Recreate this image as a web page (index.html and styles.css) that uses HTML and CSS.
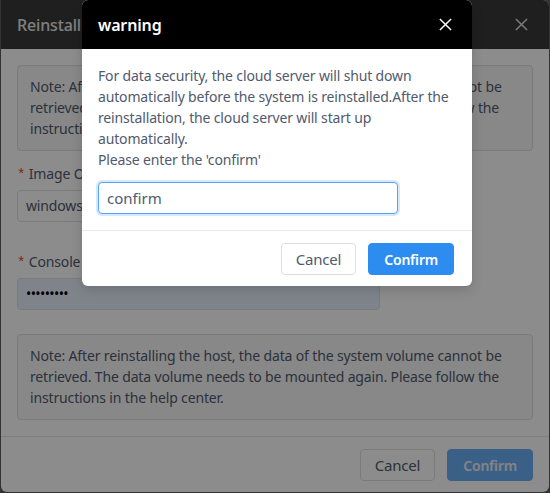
FILE: index.html
```html
<!DOCTYPE html>
<html lang="en">
<head>
    <meta charset="UTF-8">
    <meta name="viewport" content="width=device-width, initial-scale=1.0">
    <title>Reinstall</title>
    <link rel="stylesheet" href="styles.css">
</head>
<body>

    <div class="modal">
        <div class="modal-header">
            <span class="modal-title">Reinstall system</span>
            <svg class="modal-close" width="14" height="14" viewBox="0 0 14 14"><path d="M1 1L13 13M13 1L1 13" stroke="currentColor" stroke-width="1.6" fill="none"/></svg>
        </div>
        <div class="modal-body">
            <div class="note">Note: After reinstalling the host, the data of the system volume cannot be retrieved. The data volume needs to be mounted again. Please follow the instructions in the help center.</div>

            <div class="form-item form-item-first">
                <label class="form-label"><span class="req">*</span> Image OS</label>
                <div class="select">windows server 2019</div>
            </div>

            <div class="form-item">
                <label class="form-label"><span class="req">*</span> Console password</label>
                <div class="input password">&#8226;&#8226;&#8226;&#8226;&#8226;&#8226;&#8226;&#8226;&#8226;</div>
            </div>

            <div class="note">Note: After reinstalling the host, the data of the system volume cannot be retrieved. The data volume needs to be mounted again. Please follow the instructions in the help center.</div>
        </div>
        <div class="modal-footer">
            <button class="btn">Cancel</button>
            <button class="btn btn-primary btn-loading">Confirm</button>
        </div>
    </div>

    <div class="mask"></div>

    <div class="modal warning">
        <div class="modal-header">
            <span class="modal-title">warning</span>
            <svg class="modal-close" width="14" height="14" viewBox="0 0 14 14"><path d="M1 1L13 13M13 1L1 13" stroke="currentColor" stroke-width="1.6" fill="none"/></svg>
        </div>
        <div class="modal-body">
            <p class="warning-text">For data security, the cloud server will shut down automatically before the system is reinstalled.After the reinstallation, the cloud server will start up automatically.<br>Please enter the 'confirm'</p>
            <input class="input confirm-input" type="text" value="confirm">
        </div>
        <div class="modal-footer">
            <button class="btn">Cancel</button>
            <button class="btn btn-primary">Confirm</button>
        </div>
    </div>

</body>
</html>
```

FILE: styles.css
```css
body {
    margin: 0;
    height: 493px;
    overflow: hidden;
    background: #5e5e5e;
    font-family: "Noto Sans", sans-serif;
    font-size: 14px;
    letter-spacing: -0.15px;
    color: #515a6e;
    position: relative;
}

.modal {
    margin-left: 1px;
    width: 548px;
    height: 492px;
    background: #fff;
    border-radius: 0 6px 6px 6px;
    display: flex;
    flex-direction: column;
    overflow: hidden;
}

.modal-header {
    height: 49px;
    flex: none;
    display: flex;
    align-items: center;
    justify-content: space-between;
    padding: 0 16px;
    background: #3a3a3a;
    color: #fff;
}

.modal-title {
    font-size: 16px;
    font-weight: 500;
    color: #e8e8e8;
}

.modal-close {
    width: 13px;
    height: 13px;
    color: #e0e0e0;
    margin-right: 5px;
}

.modal-body {
    flex: 1;
    padding: 16px;
}

.note {
    border: 1px solid #dcdee2;
    border-radius: 4px;
    background: #f7f7f7;
    padding: 10px 12px 11px;
    line-height: 21px;
    color: #515a6e;
}

.form-item {
    margin-top: 12px;
    margin-bottom: 24px;
}

.form-item-first {
    margin-bottom: 29px;
}

.form-label {
    display: block;
    line-height: 21px;
    margin-bottom: 4px;
}

.req {
    color: #ed4014;
    font-family: SimSun, "Liberation Mono", monospace;
}

.select,
.input {
    box-sizing: border-box;
    height: 32px;
    line-height: 30px;
    border: 1px solid #dcdee2;
    border-radius: 4px;
    padding: 0 8px;
    background: #fff;
}

.select {
    width: 363px;
}

.password {
    width: 363px;
    background: #e8f0fe;
    color: #000;
    font-size: 14px;
    letter-spacing: -0.6px;
}

.modal-footer {
    flex: none;
    border-top: 1px solid #e8eaec;
    padding: 12px 16px;
    display: flex;
    justify-content: flex-end;
    gap: 12px;
}

.btn {
    height: 32px;
    padding: 0 14px;
    font-family: inherit;
    font-size: 15px;
    letter-spacing: -0.2px;
    color: #515a6e;
    background: #fff;
    border: 1px solid #dcdee2;
    border-radius: 4px;
}

.btn-primary {
    color: #fff;
    background: #2d8cf0;
    border-color: #2d8cf0;
    font-weight: 600;
    font-size: 14px;
    padding: 0 15px;
}

.btn-loading {
    background: #6cb0f8;
    border-color: #6cb0f8;
    color: #f0f0f0;
}

.mask {
    position: absolute;
    inset: 0;
    background: rgba(0, 0, 0, 0.45);
}

.warning {
    position: absolute;
    left: 81px;
    top: 0;
    width: 390px;
    height: auto;
    border-radius: 6px;
    box-shadow: 0 4px 12px rgba(0, 0, 0, 0.15);
}

.warning .modal-header {
    background: #000;
}

.warning .modal-title {
    font-weight: 600;
    color: #fff;
}

.warning .modal-close {
    color: #fff;
    margin-right: 4px;
}

.warning .modal-footer {
    padding: 12px 18px 11px 16px;
}

.warning-text {
    margin: 0 0 12px;
    line-height: 21px;
}

.confirm-input {
    display: block;
    width: 300px;
    font-family: inherit;
    font-size: 15px;
    color: #515a6e;
    border-color: #57a3f3;
    box-shadow: 0 0 0 2px rgba(45, 140, 240, 0.2);
    outline: none;
}
```
